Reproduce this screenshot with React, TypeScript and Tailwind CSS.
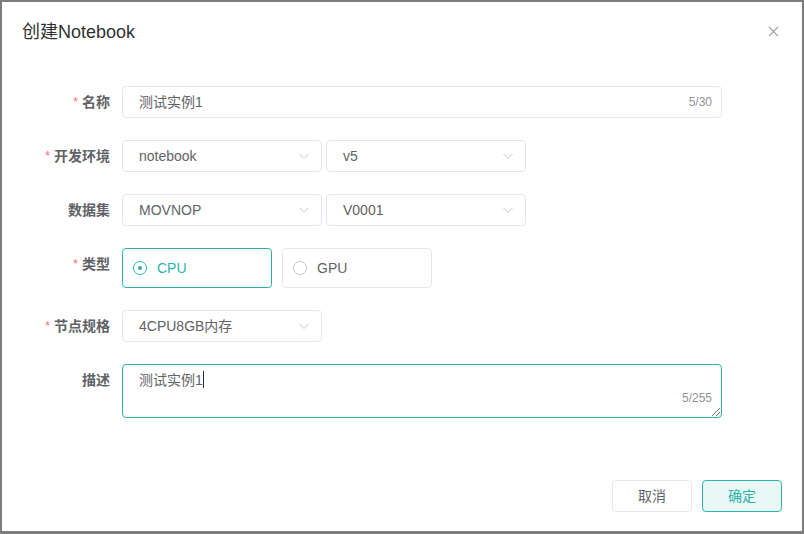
import { ReactNode } from "react";

const font = { fontFamily: '"Liberation Sans", "Noto Sans CJK SC", sans-serif' };

// chevron used by every select
function Chevron() {
  return (
    <svg className="w-[12px] h-[12px] text-[#c0c4cc]" viewBox="0 0 12 12" fill="none" stroke="currentColor" strokeWidth={1}>
      <path d="M1.5 4l4.5 4.5L10.5 4" />
    </svg>
  );
}

function Select({ value, width = "w-[200px]" }: { value: string; width?: string }) {
  return (
    <div className={`${width} h-8 flex items-center justify-between pl-4 pr-[11px] border border-[#e4e7ed] rounded text-[14px] text-[#606266]`}>
      <span>{value}</span>
      <Chevron />
    </div>
  );
}

function Row({ label, required, children }: { label: string; required?: boolean; children: ReactNode }) {
  return (
    <div className="flex items-start">
      <div className="w-[120px] h-8 flex items-center justify-end pr-3 text-[14px] font-bold text-[#606266]">
        {required && <span className="text-[#f56c6c] text-[12px] mr-[4px] font-normal">*</span>}
        {label}
      </div>
      {children}
    </div>
  );
}

function RadioBox({ label, checked }: { label: string; checked?: boolean }) {
  return (
    <div
      className={`w-[150px] h-10 flex items-center pl-[10px] border rounded text-[14px] ${
        checked ? "border-[#2ab3aa] text-[#2ab3aa]" : "border-[#e4e7ed] text-[#606266]"
      }`}
    >
      <span
        className={`w-[14px] h-[14px] rounded-full border flex items-center justify-center mr-[10px] ${
          checked ? "border-[#2ab3aa]" : "border-[#c0c4cc]"
        }`}
      >
        {checked && <span className="w-[4px] h-[4px] rounded-full bg-[#2ab3aa]" />}
      </span>
      {label}
    </div>
  );
}

export default function App() {
  return (
    <div className="w-[804px] h-[534px] bg-[#7d7d7d] pt-[2px] pl-[2px] overflow-hidden" style={font}>
      <div className="w-[800px] h-[529px] bg-white flex flex-col">
        {/* Header */}
        <div className="flex items-center justify-between pl-5 pr-[23px] pt-[2px] h-[62px]">
          <h2 className="text-[18px] text-[#303133] leading-6 -mt-[4px]">创建Notebook</h2>
          <svg className="w-[11px] h-[11px] text-[#909399] -mt-[6px]" viewBox="0 0 12 12" stroke="currentColor" strokeWidth={1.1}>
            <path d="M1 1l10 10M11 1L1 11" />
          </svg>
        </div>

        {/* Form */}
        <div className="flex flex-col gap-[22px] pt-[22px]">
          <Row label="名称" required>
            <div className="w-[600px] h-8 flex items-center justify-between pl-4 pr-[9px] border border-[#e4e7ed] rounded">
              <span className="text-[14px] text-[#606266]">测试实例1</span>
              <span className="text-[12px] text-[#909399]">5/30</span>
            </div>
          </Row>
          <Row label="开发环境" required>
            <div className="flex gap-[4px]">
              <Select value="notebook" />
              <Select value="v5" />
            </div>
          </Row>
          <Row label="数据集">
            <div className="flex gap-[4px]">
              <Select value="MOVNOP" />
              <Select value="V0001" />
            </div>
          </Row>
          <Row label="类型" required>
            <div className="flex gap-[10px]">
              <RadioBox label="CPU" checked />
              <RadioBox label="GPU" />
            </div>
          </Row>
          <Row label="节点规格" required>
            <Select value="4CPU8GB内存" />
          </Row>
          <Row label="描述">
            <div className="relative w-[600px] h-[54px] border border-[#2ab3aa] rounded pl-4 pt-[3px]">
              <span className="text-[14px] text-[#606266] leading-5">测试实例1</span>
              <span className="inline-block w-[1.5px] h-[17px] bg-[#303133] align-middle -mt-[3px]" />
              <span className="absolute right-[9px] bottom-[11px] text-[12px] text-[#909399] leading-4">5/255</span>
              <svg className="absolute right-[1px] bottom-[1px] w-[9px] h-[9px] text-[#555]" viewBox="0 0 9 9" stroke="currentColor" strokeWidth={0.8}>
                <path d="M1 9L9 1M5 9L9 5" />
              </svg>
            </div>
          </Row>
        </div>

        {/* Footer */}
        <div className="mt-auto flex justify-end gap-[10px] pr-5 pb-[19px]">
          <button className="w-20 h-8 border border-[#e4e7ed] rounded text-[14px] text-[#606266] bg-white">取消</button>
          <button className="w-20 h-8 border border-[#2ab3aa] rounded text-[14px] text-[#2ab3aa] bg-[#e9f7f6]">确定</button>
        </div>
      </div>
    </div>
  );
}
